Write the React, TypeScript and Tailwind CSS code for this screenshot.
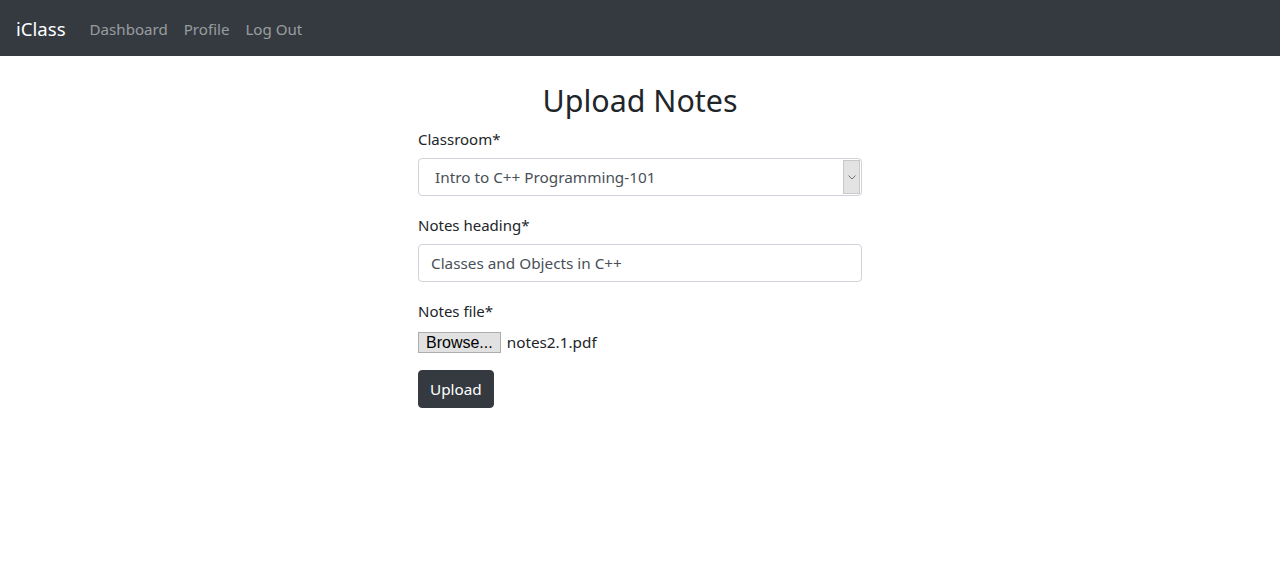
import React from "react";

export default function App() {
  const font = { fontFamily: '"Noto Sans", Roboto, sans-serif' };
  return (
    <div className="min-h-[579px] bg-white text-[#212529]" style={font}>
      <nav className="h-14 bg-[#343a40] flex items-center px-4 pt-[2px]">
        <span className="text-[18.6px] leading-[30px] text-white mr-4">iClass</span>
        <span className="text-[15.1px] px-2 text-white/50">Dashboard</span>
        <span className="text-[15.1px] px-2 text-white/50">Profile</span>
        <span className="text-[15.1px] px-2 text-white/50">Log Out</span>
      </nav>
      <div className="w-[444px] mx-auto text-[15.3px]">
        <h2 className="mt-[25px] mb-[6px] text-[30.4px] leading-[40px] text-center font-normal">Upload Notes</h2>
        <div className="mb-[17px]">
          <div className="text-[15px] leading-6 mb-[7px]">Classroom*</div>
          <div className="h-[38px] border border-[#ced4da] rounded flex items-center pl-[16px] pr-px text-[#495057]">
            <span className="flex-1">Intro to C++ Programming-101</span>
            <div className="w-[17px] h-[34px] bg-[#e3e3e3] border border-[#c8c8c8] flex items-center justify-center">
              <svg width="8" height="5" viewBox="0 0 8 5">
                <path d="M0.5 0.5 L4 4 L7.5 0.5" fill="none" stroke="#707070" strokeWidth="1" />
              </svg>
            </div>
          </div>
        </div>
        <div className="mb-[17px]">
          <div className="text-[15px] leading-6 mb-[7px]">Notes heading*</div>
          <div className="h-[38px] border border-[#ced4da] rounded flex items-center px-3 text-[#495057]">
            Classes and Objects in C++
          </div>
        </div>
        <div className="mb-4">
          <div className="text-[15px] leading-6 mb-[7px]">Notes file*</div>
          <div className="h-6 flex items-center">
            <span
              className="h-[21px] mt-[1px] px-[7px] bg-[#e1e1e1] border border-[#adadad] flex items-center text-[16px] text-black"
              style={{ fontFamily: '"Liberation Sans", Arial, sans-serif' }}
            >
              Browse...
            </span>
            <span className="ml-[6px]">notes2.1.pdf</span>
          </div>
        </div>
        <button className="h-[38px] px-[11px] bg-[#343a40] text-white rounded border border-[#343a40]">
          Upload
        </button>
      </div>
    </div>
  );
}
